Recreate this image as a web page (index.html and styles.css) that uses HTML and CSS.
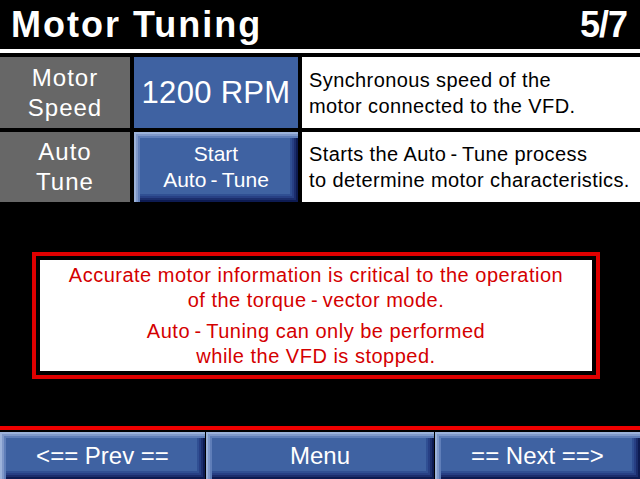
FILE: index.html
```html
<!DOCTYPE html>
<html>
<head>
<meta charset="utf-8">
<link rel="stylesheet" href="styles.css">
</head>
<body>
<div class="screen">
  <header class="header">
    <h1 class="title">Motor Tuning</h1>
    <span class="page">5/7</span>
  </header>
  <div class="rule"></div>
  <div class="grid">
    <div class="label">Motor<br>Speed</div>
    <div class="value">1200 RPM</div>
    <div class="desc">Synchronous speed of the<br>motor connected to the VFD.</div>
    <div class="label">Auto<br>Tune</div>
    <div class="btn start">Start<br>Auto&#8201;-&#8201;Tune</div>
    <div class="desc">Starts the Auto&#8201;-&#8201;Tune process<br>to determine motor characteristics.</div>
  </div>
  <div class="warn">
    <div class="warn-inner">
      <p class="warn-p">Accurate motor information is critical to the operation<br>of the torque&#8201;-&#8201;vector mode.</p>
      <p class="warn-p">Auto&#8201;-&#8201;Tuning can only be performed<br>while the VFD is stopped.</p>
    </div>
  </div>
  <footer class="footer">
    <div class="btn nav">&lt;== Prev ==</div>
    <div class="btn nav">Menu</div>
    <div class="btn nav">== Next ==&gt;</div>
  </footer>
</div>
</body>
</html>
```
FILE: styles.css
```css
html, body {
  margin: 0;
  padding: 0;
  background: #000;
}
.screen {
  width: 640px;
  height: 479px;
  overflow: hidden;
  display: flex;
  flex-direction: column;
  font-family: "Liberation Sans", Arial, sans-serif;
  color: #fff;
}
.header {
  height: 49px;
  display: flex;
  align-items: center;
  justify-content: space-between;
  padding: 0 13px 0 11px;
}
.title {
  margin: 0;
  font-size: 36px;
  font-weight: bold;
  letter-spacing: 2px;
  line-height: 40px;
}
.page {
  font-size: 36px;
  font-weight: bold;
  line-height: 40px;
  letter-spacing: -1px;
}
.rule {
  height: 4px;
  background: #fff;
  margin-bottom: 4px;
}
.grid {
  display: grid;
  grid-template-columns: 130px 164px 1fr;
  grid-template-rows: 71px 70px;
  gap: 4px;
}
.label {
  background: #676767;
  display: flex;
  align-items: center;
  justify-content: center;
  text-align: center;
  font-size: 24px;
  line-height: 30px;
  letter-spacing: 1px;
}
.value {
  background: #3f62a2;
  display: flex;
  align-items: center;
  justify-content: center;
  font-size: 31px;
  letter-spacing: 0.3px;
}
.desc {
  background: #fff;
  color: #000;
  display: flex;
  align-items: center;
  padding-left: 7px;
  font-size: 20px;
  line-height: 26px;
  letter-spacing: 0.4px;
}
.btn {
  background: #3f62a2;
  display: flex;
  align-items: center;
  justify-content: center;
  text-align: center;
  color: #fff;
  box-shadow:
    inset 2px 2px 0 #9cb2da,
    inset 4px 4px 0 #7f98c9,
    inset 6px 6px 0 #5f7eb9,
    inset -2px -2px 0 #0d1b52,
    inset -4px -4px 0 #1b2d6c,
    inset -6px -6px 0 #273f84,
    inset -8px -8px 0 #304f93;
}
.start {
  font-size: 21px;
  line-height: 26px;
  padding-bottom: 1px;
}
.warn {
  margin: 50px 0 0 32px;
  width: 568px;
  border: 4px solid #e00000;
  background: #000;
  padding: 4px;
  box-sizing: border-box;
  height: 127px;
}
.warn-inner {
  background: #fff;
  height: 111px;
  padding-top: 3px;
  box-sizing: border-box;
  text-align: center;
  color: #d40000;
  font-size: 20px;
  line-height: 25px;
  letter-spacing: 0.5px;
}
.warn-p {
  margin: 0 0 6px 0;
}
.footer {
  margin-top: auto;
  border-top: 4px solid #f00000;
  padding-top: 2px;
  display: grid;
  grid-template-columns: 205px 228px 1fr;
  gap: 1px;
}
.nav {
  height: 47px;
  font-size: 24px;
  box-sizing: border-box;
}
```
